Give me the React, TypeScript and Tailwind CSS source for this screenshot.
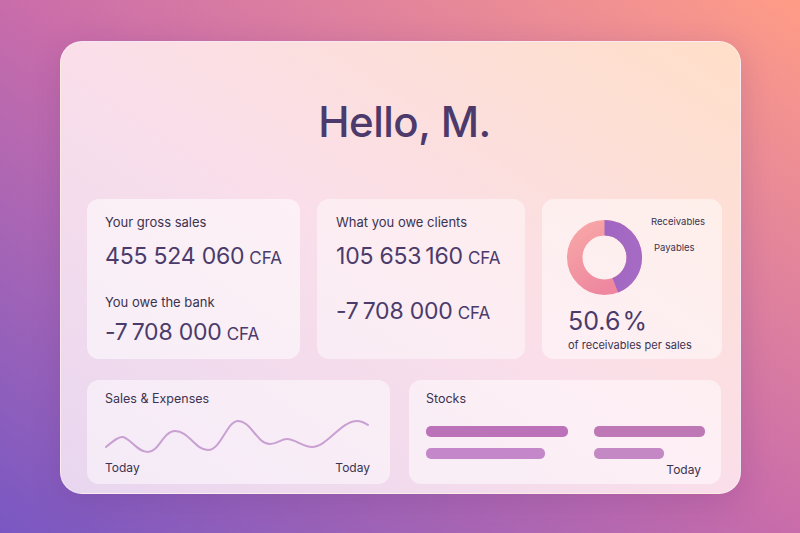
import React from "react";

const wavePath =
  "M1 28 C 8 22, 14 17, 18 18 C 26 20, 32 33, 43 33 C 54 33, 58 12, 70 12 C 84 12, 90 31, 103 31 C 116 31, 122 2, 133 2 C 146 2, 152 25, 165 25 C 172 25, 176 20, 182 20 C 190 20, 198 28, 207 28 C 222 28, 236 2, 252 2 C 257 2, 260 4, 263 6";

const Donut = () => {
  const r = 29.75;
  const c = 2 * Math.PI * r;
  const purple = c * 0.44;
  return (
    <svg width="75" height="75" viewBox="0 0 75 75">
      <defs>
        <linearGradient id="pinkG" x1="0" y1="0" x2="0.6" y2="1">
          <stop offset="0" stopColor="#f7a6a6" />
          <stop offset="1" stopColor="#ee879f" />
        </linearGradient>
        <linearGradient id="purpleG" x1="0" y1="0" x2="0" y2="1">
          <stop offset="0" stopColor="#9a61c2" />
          <stop offset="1" stopColor="#a56ac3" />
        </linearGradient>
      </defs>
      <circle cx="37.5" cy="37.5" r={r} fill="none" stroke="url(#pinkG)" strokeWidth="15.5" />
      <circle
        cx="37.5"
        cy="37.5"
        r={r}
        fill="none"
        stroke="url(#purpleG)"
        strokeWidth="15.5"
        strokeDasharray={`${purple} ${c - purple}`}
        transform="rotate(-90 37.5 37.5)"
      />
    </svg>
  );
};

const Amount = ({ value }: { value: string }) => (
  <div className="flex items-baseline leading-[30px] text-[#4a3b6b]">
    <span className="text-[23px] tracking-[-0.2px]">{value}</span>
    <span className="ml-[5px] text-[17px]">CFA</span>
  </div>
);

export default function App() {
  return (
    <div
      className="h-[533px] w-[800px] overflow-hidden bg-linear-to-tr from-[#7957c2] via-[#c96caa] to-[#ff9c86] pl-[60px] pt-[41px]"
      style={{ fontFamily: "Inter, 'Noto Sans', sans-serif" }}
    >
      <div className="flex h-[453px] w-[681px] flex-col rounded-[22px] border border-white/40 bg-linear-to-tr from-[#e8d6f0] via-[#fadfea] to-[#ffdfc8] pb-[9px] pl-[26px] pr-[18px] pt-[58px] shadow-[0_8px_30px_rgba(80,40,120,0.18)]">
        <h1 className="mb-[55px] text-center text-[42px] font-medium leading-[44px] tracking-[-0.5px] text-[#4b3a6b]">
          Hello, M.
        </h1>

        <div className="grid grid-cols-[213px_208px_180px] gap-x-[17px]">
          <div className="flex h-[160px] flex-col rounded-[12px] bg-white/55 pl-[18px] pt-[15px]">
            <p className="text-[13px] leading-4 text-[#3b3350]">Your gross sales</p>
            <div className="mt-[11px]">
              <Amount value="455 524 060" />
            </div>
            <p className="mt-[21px] text-[13px] leading-4 text-[#3b3350]">You owe the bank</p>
            <div className="mt-[7px]">
              <Amount value={"-7\u2009708 000"} />
            </div>
          </div>

          <div className="flex h-[160px] flex-col rounded-[12px] bg-white/45 pl-[19px] pt-[15px]">
            <p className="text-[13px] leading-4 text-[#3b3350]">What you owe clients</p>
            <div className="mt-[11px]">
              <Amount value={"105 653\u2009160"} />
            </div>
            <div className="mt-[23px]">
              <Amount value={"-7\u2009708 000"} />
            </div>
          </div>

          <div className="flex h-[160px] flex-col rounded-[12px] bg-white/50 pl-[25px] pt-[21px]">
            <div className="flex items-start">
              <Donut />
              <div className="-mt-[5px] ml-[9px] flex flex-col text-[9.5px] leading-[14px] text-[#3b3350]">
                <span>Receivables</span>
                <span className="ml-[3px] mt-[12px]">Payables</span>
              </div>
            </div>
            <p className="ml-[1px] mt-[11px] text-[25px] leading-[30px] text-[#4a3b6b]">
              50.6<span className="ml-[2px]">%</span>
            </p>
            <p className="ml-[1px] mt-[2px] text-[11px] leading-[14px] text-[#3b3350]">
              of receivables per sales
            </p>
          </div>
        </div>

        <div className="mt-[21px] grid grid-cols-[303px_312px] gap-x-[19px]">
          <div className="flex h-[104px] flex-col rounded-[12px] bg-white/50 pl-[18px] pr-[20px] pt-[11px]">
            <p className="text-[12.5px] leading-4 text-[#3b3350]">Sales &amp; Expenses</p>
            <svg className="mt-[12px]" width="265" height="36" viewBox="0 0 265 36">
              <path d={wavePath} fill="none" stroke="#c9a0d2" strokeWidth="2" strokeLinecap="round" />
            </svg>
            <div className="mt-[5px] flex justify-between text-[12px] leading-4 text-[#3b3350]">
              <span>Today</span>
              <span>Today</span>
            </div>
          </div>

          <div className="flex h-[104px] flex-col rounded-[12px] bg-white/50 pl-[17px] pr-[16px] pt-[11px]">
            <p className="text-[12.5px] leading-4 text-[#3b3350]">Stocks</p>
            <div className="mt-[19px] grid grid-cols-[142px_111px] gap-x-[26px] gap-y-[11px]">
              <div className="h-[11px] rounded-[5px] bg-[#bb72b9]" />
              <div className="h-[11px] rounded-[5px] bg-[#bf78b6]" />
              <div className="h-[11px] w-[119px] rounded-[5px] bg-[#c487c9]" />
              <div className="h-[11px] w-[70px] rounded-[5px] bg-[#c488c4]" />
            </div>
            <p className="mr-[4px] mt-[3px] text-right text-[12px] leading-4 text-[#3b3350]">Today</p>
          </div>
        </div>
      </div>
    </div>
  );
}
